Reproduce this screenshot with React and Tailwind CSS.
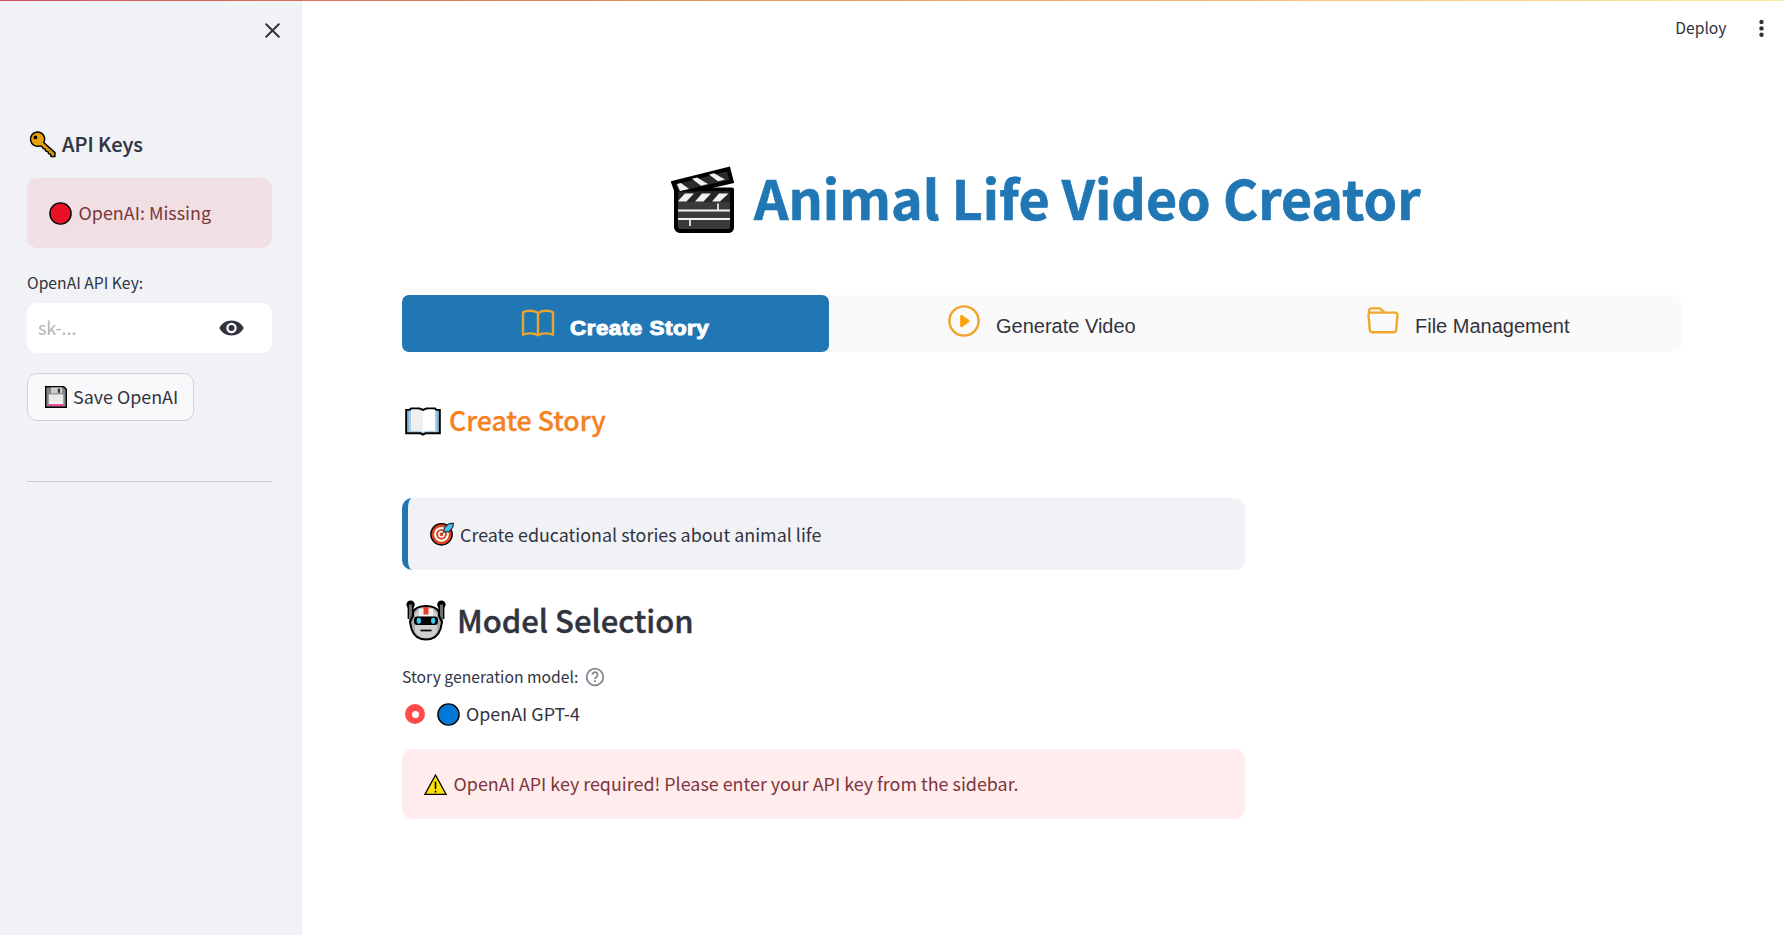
import React from 'react';

function Key() {
  return (
    <svg className="h-[27px] w-[27px] shrink-0" viewBox="0 0 26 26">
      <path d="M7.800.9a6.900 6.900 0 1 0 2.800 13.400l1.600.5 1.600 2 1.800.6.6 2 2 .4.6 2 2 .6.4 2.200h3.800v-3.800L14.200 11A6.900 6.900 0 0 0 7.800.9Z" fill="#e7a109" stroke="#000" strokeWidth="1.400" strokeLinejoin="round" />
      <path d="m14 12.600 9.500 9.600" stroke="#c4860c" strokeWidth="1" />
      <circle cx="6.200" cy="6.200" r="1.800" fill="#000" />
    </svg>
  );
}

function Disc({ color }) {
  return (
    <svg className="h-[23px] w-[23px] shrink-0" viewBox="0 0 23 23">
      <circle cx="11.500" cy="11.500" r="10.600" fill={color} stroke="#000" strokeWidth="1.400" />
    </svg>
  );
}

function Floppy() {
  return (
    <svg className="h-[22px] w-[22px] shrink-0" viewBox="0 0 22 22">
      <path d="M.7.7h18.100l2.500 2.500v18.100H.7Z" fill="#858585" stroke="#000" strokeWidth="1.400" />
      <path d="M6 1.400h11v6H6Z" fill="#c9ccce" />
      <path d="M12.800 2.600h2.200v4.200h-2.200Z" fill="#333" />
      <path d="M3.700 8.500h14.600V19H3.700Z" fill="#efefef" />
      <path d="M4 11h14M4 14h14" stroke="#ddd" strokeWidth=".8" />
      <path d="M3.700 18.200h14.600v2H3.700Z" fill="#e8388f" />
    </svg>
  );
}

function Eye() {
  return (
    <svg className="h-[16px] w-[25px] shrink-0" viewBox="0 0 25 16">
      <path d="M12.500.5C7 .5 2.300 3.600.3 8c2 4.400 6.700 7.500 12.200 7.500S22.700 12.400 24.700 8C22.700 3.600 18 .5 12.500.5Z" fill="#31333f" />
      <circle cx="12.500" cy="8" r="5.200" fill="#fff" />
      <circle cx="12.500" cy="8" r="3" fill="#31333f" />
    </svg>
  );
}

function Clapper() {
  return (
    <svg className="h-[68px] w-[64px] shrink-0" viewBox="0 0 64 68">
      <path d="M5 23.500h56v38a3.500 3.500 0 0 1-3.500 3.500H9a4 4 0 0 1-4-4Z" fill="#3a3a3a" stroke="#000" strokeWidth="4" strokeLinejoin="round" />
      <path d="M2.300 16.800 57.500 3l3.200 12.400L8 27.500l-3-3Z" fill="#2b2b2b" stroke="#000" strokeWidth="4" />
      <path d="M7 25.500h52V36H7Z" fill="#262626" />
      <path d="M14 27.500h9l-7.500 8H7.500v-1ZM31 27.500h9l-7.500 8H24ZM48 27.500h9.500l-8.500 8h-8Z" fill="#f3f0f3" />
      <path d="m6 18 4-1 8 6-9 2Zm20-6.500-5 1.300 9 7 7-1.800Zm17-4.300-5 1.300 9 6.800 7-1.800Z" fill="#f3f0f3" />
      <path d="M7 44.500h52M7 53h52" stroke="#f1f1f1" strokeWidth="1.800" />
      <path d="M47 37.500V44M19 53v7" stroke="#e9e9e9" strokeWidth="1.800" />
    </svg>
  );
}

function OutlineBook() {
  return (
    <svg className="mb-px h-[29px] w-[34px] shrink-0" viewBox="0 0 34 29" fill="none" stroke="#e9a52c" strokeWidth="2.400" strokeLinejoin="round">
      <path d="M17 4C13 1.200 6 1 2 3.200v22.600c4-2 11-2 15 .4 4-2.400 11-2.400 15-.4V3.200C28 1 21 1.200 17 4Zm0 0v22" />
    </svg>
  );
}

function PlayCircle() {
  return (
    <svg className="mb-[5px] h-[32px] w-[32px] shrink-0" viewBox="0 0 32 32">
      <circle cx="16" cy="16" r="14.600" fill="none" stroke="#f0a22b" strokeWidth="2.400" />
      <path d="M12.700 11v10a.8.8 0 0 0 1.200.7l7-5a.8.8 0 0 0 0-1.300l-7-5a.8.8 0 0 0-1.200.6Z" fill="#fea20b" stroke="#fea20b" strokeWidth="1" />
    </svg>
  );
}

function Folder() {
  return (
    <svg className="mb-[6px] h-[27px] w-[32px] shrink-0" viewBox="0 0 32 27" fill="none" stroke="#f3a62d" strokeWidth="2.400">
      <path d="M3.800 5.600h24.400a2.300 2.300 0 0 1 2.300 2.500L29.200 23a2.400 2.400 0 0 1-2.400 2.200H5.200A2.400 2.400 0 0 1 2.800 23L1.500 8.100a2.300 2.300 0 0 1 2.300-2.500Z" />
      <path d="M2 7V3.800a2.400 2.400 0 0 1 2.400-2.400h7.700a2.400 2.400 0 0 1 1.700.7L17.300 5.400" />
    </svg>
  );
}

function OpenBook() {
  return (
    <svg className="mt-[2px] h-[29px] w-[36px] shrink-0" viewBox="0 0 36 30" preserveAspectRatio="none">
      <path d="M1.200 3h3.300L6 1.500h8.500L18 3l3.500-1.500H30L31.500 3h3.300v24.200H20.500L18 28.600l-2.500-1.400H1.200Z" fill="#a9cde5" stroke="#000" strokeWidth="2" />
      <path d="M6 2.900Q13 1.500 18 4.500v21.300q-4.500-1.800-12-1Z" fill="#f0f0f1" />
      <path d="M30 2.900Q23 1.500 18 4.500v21.300q4.500-1.800 12-1Z" fill="#fff" />
      <path d="M3 4V25.500M33 4V25.500" stroke="#5b97c4" strokeWidth="1" />
    </svg>
  );
}

function Target() {
  return (
    <svg className="h-[24px] w-[24px] shrink-0" viewBox="0 0 24 24">
      <circle cx="11.500" cy="12.300" r="10.700" fill="#dc4526" stroke="#000" strokeWidth="1.300" />
      <circle cx="11.500" cy="12.300" r="6.400" fill="none" stroke="#fff" strokeWidth="2" />
      <circle cx="11.500" cy="12.300" r="2.600" fill="none" stroke="#fff" strokeWidth="1.500" />
      <path d="m11.800 12 4-4.200" stroke="#1c2d3b" strokeWidth="1" />
      <path d="m14 9.800.3-4 4.500-4 4.600-.8-.6 4.600-4 4.400Z" fill="#36b9ed" stroke="#111" strokeWidth="1" />
      <path d="m14.600 9.200 6-6" stroke="#7fdcfb" strokeWidth=".9" />
    </svg>
  );
}

function Robot() {
  return (
    <svg className="h-[41px] w-[40px] shrink-0" viewBox="0 0 40 41">
      <path d="M4.600 5v14M35.400 5v14" stroke="#000" strokeWidth="6" />
      <circle cx="4.600" cy="4.600" r="4.200" fill="#000" />
      <circle cx="35.400" cy="4.600" r="4.200" fill="#000" />
      <path d="M4.500 4.500v16l2 2M35.500 4.500v16l-2 2" fill="none" stroke="#6f6f6f" strokeWidth="3" />
      <path d="M7 12q3-6 13-6t13 6v4l3 6-1.500 7Q31 39.500 20 39.500T5.500 29L4 22l3-6Z" fill="#a9a9a9" stroke="#000" strokeWidth="2" />
      <path d="M9 14q3-6 11-6t11 6v18q-4 6-11 6T9 32Z" fill="#d0d0d0" />
      <path d="M13 8.500h14v8H13Z" fill="#f1f1f1" />
      <path d="M17.500 7h5v7.500h-5Z" fill="#ea3c20" />
      <path d="M11 16.500h18q3 0 3 4.200t-3 4.300H11q-3 0-3-4.300t3-4.200Z" fill="#000" />
      <ellipse cx="12.800" cy="20.700" rx="2.200" ry="3" fill="#43c8ee" />
      <ellipse cx="27.200" cy="20.700" rx="2.200" ry="3" fill="#43c8ee" />
      <path d="M14.500 30.500h11" stroke="#000" strokeWidth="1.700" />
    </svg>
  );
}

function Help() {
  return (
    <svg className="h-[20px] w-[20px] shrink-0" viewBox="0 0 20 20" fill="none" stroke="#85868d" strokeWidth="1.800">
      <circle cx="10" cy="10" r="8.300" />
      <path d="M7.400 7.800a2.600 2.600 0 1 1 4 2.100c-.9.600-1.400 1-1.400 2" />
      <path d="M10 13.200v1.700" />
    </svg>
  );
}

function Warning() {
  return (
    <svg className="h-[23px] w-[23px] shrink-0" viewBox="0 0 23 23">
      <path d="M11.500 2 22 21.300H1Z" fill="#fbe00b" stroke="#000" strokeWidth="1.300" />
      <path d="M11.500 8.500v7.500M11.500 17.500v2" stroke="#000" strokeWidth="1.500" />
    </svg>
  );
}

export default function App() {
  return (
    <div className="flex h-[935px] w-[1784px] flex-col overflow-hidden bg-white font-['Noto_Sans_CJK_JP',sans-serif] text-[17.900px] text-[#31333f]">
      <div className="h-px shrink-0 bg-linear-to-r from-[#c9565c] via-[#f3a05c] to-[#fbeb9c]" />
      <div className="flex min-h-0 flex-1">
        <aside className="flex w-[302px] shrink-0 flex-col bg-[#f0f2f6] pr-[30px] pl-[27px]">
          <div className="flex h-[58px] justify-end pt-[22px]">
            <svg className="mr-[-8px] h-[15px] w-[15px]" viewBox="0 0 15 15" stroke="#31333f" strokeWidth="2" strokeLinecap="round"><path d="m1.200 1.200 12.600 12.600M13.800 1.200 1.200 13.800" /></svg>
          </div>
          <h3 className="mt-[69px] flex h-8 items-center gap-[6px] pl-[2px] text-[20px] leading-8 font-medium whitespace-nowrap [-webkit-text-stroke:0.2px_#31333f]"><Key /><span>API Keys</span></h3>
          <div className="mt-[18px] flex h-[70px] items-center gap-[6.600px] rounded-[10px] bg-[#f0dfe3] pl-[22px] whitespace-nowrap text-[#7d353b]"><Disc color="#e81224" /><span className="pb-[2px]">OpenAI: Missing</span></div>
          <label className="mt-[23px] h-6 text-[15.700px] leading-6 whitespace-nowrap">OpenAI API Key:</label>
          <div className="mt-[8px] flex h-[50px] items-center justify-between rounded-[10px] bg-white pr-[28px] pl-[11px]"><span className="pb-[2px] text-[#b4b5ba]">sk-...</span><Eye /></div>
          <button className="mt-[20px] flex h-[48px] w-[167px] items-center gap-[6px] rounded-[10px] border border-[#d0d2d7] bg-[#f9f9fb] pl-[17px] whitespace-nowrap"><Floppy /><span className="pb-[2px]">Save OpenAI</span></button>
          <hr className="mt-[60px] border-[#cbccd2]" />
        </aside>
        <main className="flex min-w-0 flex-1 flex-col pl-[100px]">
          <header className="flex h-[55px] items-center justify-end gap-[32.500px] pr-[20px] text-[15.700px]">
            <span className="pb-[2px]">Deploy</span>
            <svg className="h-[19px] w-[5px]" viewBox="0 0 5 19" fill="#31333f"><circle cx="2.500" cy="3" r="2.200" /><circle cx="2.500" cy="9.400" r="2.200" /><circle cx="2.500" cy="15.800" r="2.200" /></svg>
          </header>
          <h1 className="mt-[104px] flex h-[80px] items-center gap-[19px] pl-[269px] text-[53.700px] leading-[74px] font-bold whitespace-nowrap text-[#2077b4] [-webkit-text-stroke:0.7px_#2077b4]"><Clapper /><span className="pb-[6px]">Animal Life Video Creator</span></h1>
          <nav className="mt-[55px] flex h-[57px] w-[1280px] rounded-[10px] bg-[#fafafa] font-['Liberation_Sans',sans-serif] text-[20px] whitespace-nowrap">
            <div className="flex w-[427px] items-center gap-[14px] rounded-[7px] bg-[#2077b4] pl-[119px] text-white"><OutlineBook /><span className="mt-[8px] ml-px origin-left scale-x-[1.12] font-bold tracking-[0.45px] [-webkit-text-stroke:1px_white]">Create Story</span></div>
            <div className="flex w-[426px] items-center gap-[16px] pl-[119px]"><PlayCircle /><span className="mt-[5px]">Generate Video</span></div>
            <div className="flex w-[427px] items-center gap-[16px] pl-[112px]"><Folder /><span className="mt-[5px]">File Management</span></div>
          </nav>
          <h2 className="mt-[47px] flex h-[42px] items-center gap-[8px] pl-[3px] text-[26.700px] leading-[42px] font-medium whitespace-nowrap text-[#f58220] [-webkit-text-stroke:0.3px_#f58220]"><OpenBook /><span>Create Story</span></h2>
          <div className="mt-[57px] flex h-[72px] w-[843px] items-center gap-[6px] rounded-[10px] border-l-[6px] border-[#2077b4] bg-[#f0f2f6] pl-[22px] whitespace-nowrap"><Target /><span>Create educational stories about animal life</span></div>
          <h2 className="mt-[25px] flex h-[50px] items-center gap-[11px] pl-[4px] text-[31px] leading-[50px] font-medium whitespace-nowrap [-webkit-text-stroke:0.4px_#31333f]"><Robot /><span>Model Selection</span></h2>
          <div className="mt-[20px] flex h-6 items-center gap-[7px] text-[15.700px] whitespace-nowrap"><span>Story generation model:</span><Help /></div>
          <div className="mt-[11px] flex h-[28px] items-center whitespace-nowrap">
            <span className="mr-[12px] ml-[3px] flex h-[20px] w-[20px] items-center justify-center rounded-full bg-[#ff4b4b]"><span className="h-[7px] w-[7px] rounded-full bg-white" /></span>
            <Disc color="#0078d7" /><span className="ml-[6px] pb-[2px]">OpenAI GPT-4</span>
          </div>
          <div className="mt-[21px] flex h-[70px] w-[843px] items-center gap-[6.600px] rounded-[10px] bg-[#ffecec] pl-[22px] whitespace-nowrap text-[#7d353b]"><Warning /><span className="pb-[2px]">OpenAI API key required! Please enter your API key from the sidebar.</span></div>
        </main>
      </div>
    </div>
  );
}
